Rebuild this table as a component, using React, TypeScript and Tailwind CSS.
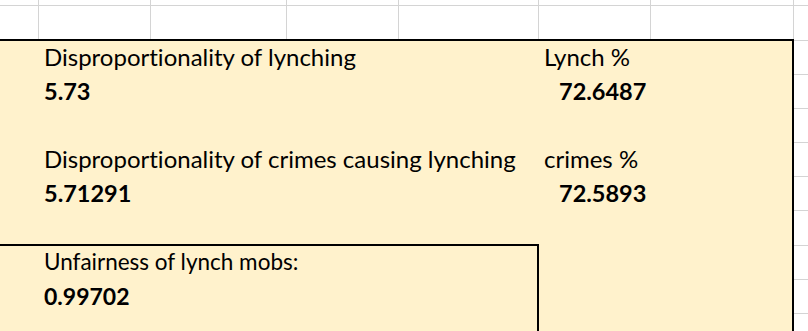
import React from "react";

const colW = [
  "w-[39px]",
  "w-[112px]",
  "w-[136px]",
  "w-[112px]",
  "w-[140px]",
  "w-[112px]",
  "w-[143px]",
  "w-[120px]",
];

const rowH = [
  "h-[6px]",
  "h-[35px]",
  "h-[34px]",
  "h-[34px]",
  "h-[34px]",
  "h-[34px]",
  "h-[34px]",
  "h-[35px]",
  "h-[34px]",
  "h-[34px]",
  "h-[34px]",
];

function Sheet() {
  return (
    <div className="flex flex-col">
      {rowH.map((h, r) => (
        <div key={r} className={`flex ${h}`}>
          {colW.map((w, c) => (
            <div
              key={c}
              className={`${w} shrink-0 border-r border-b border-[#d4d4d4]`}
            />
          ))}
        </div>
      ))}
    </div>
  );
}

function Line({
  children,
  bold = false,
  size,
  className = "",
}: {
  children?: React.ReactNode;
  bold?: boolean;
  size?: string;
  className?: string;
}) {
  const sz = size ?? (bold ? "text-[23.5px]" : "text-[24px]");
  return (
    <div
      className={`h-[34px] leading-[32px] whitespace-nowrap [font-variant-ligatures:none] ${
        bold ? "font-bold" : "font-normal"
      } ${sz} ${className}`}
    >
      {children}
    </div>
  );
}

export default function App() {
  return (
    <div
      className="relative w-[808px] h-[331px] overflow-hidden bg-white text-black"
      style={{ fontFamily: "Lato, 'Open Sans', sans-serif" }}
    >
      <Sheet />
      <div className="absolute left-[-10px] top-[39px] w-[804px] h-[310px] border-2 border-black bg-[#fff2cc]">
        <div className="grid grid-cols-[500px_1fr] pl-[52px]">
          <Line>Disproportionality of lynching</Line>
          <Line>Lynch %</Line>
          <Line bold>5.73</Line>
          <Line bold className="pl-[15px]">72.6487</Line>
          <Line />
          <Line />
          <Line>Disproportionality of crimes causing lynching</Line>
          <Line>crimes %</Line>
          <Line bold>5.71291</Line>
          <Line bold className="pl-[15px]">72.5893</Line>
        </div>
        <div className="h-[33px]" />
        <div className="w-[547px] h-[120px] border-2 border-black pl-[50px]">
          <Line size="text-[22.5px]">Unfairness of lynch mobs:</Line>
          <Line bold size="text-[23px]">0.99702</Line>
        </div>
      </div>
    </div>
  );
}
